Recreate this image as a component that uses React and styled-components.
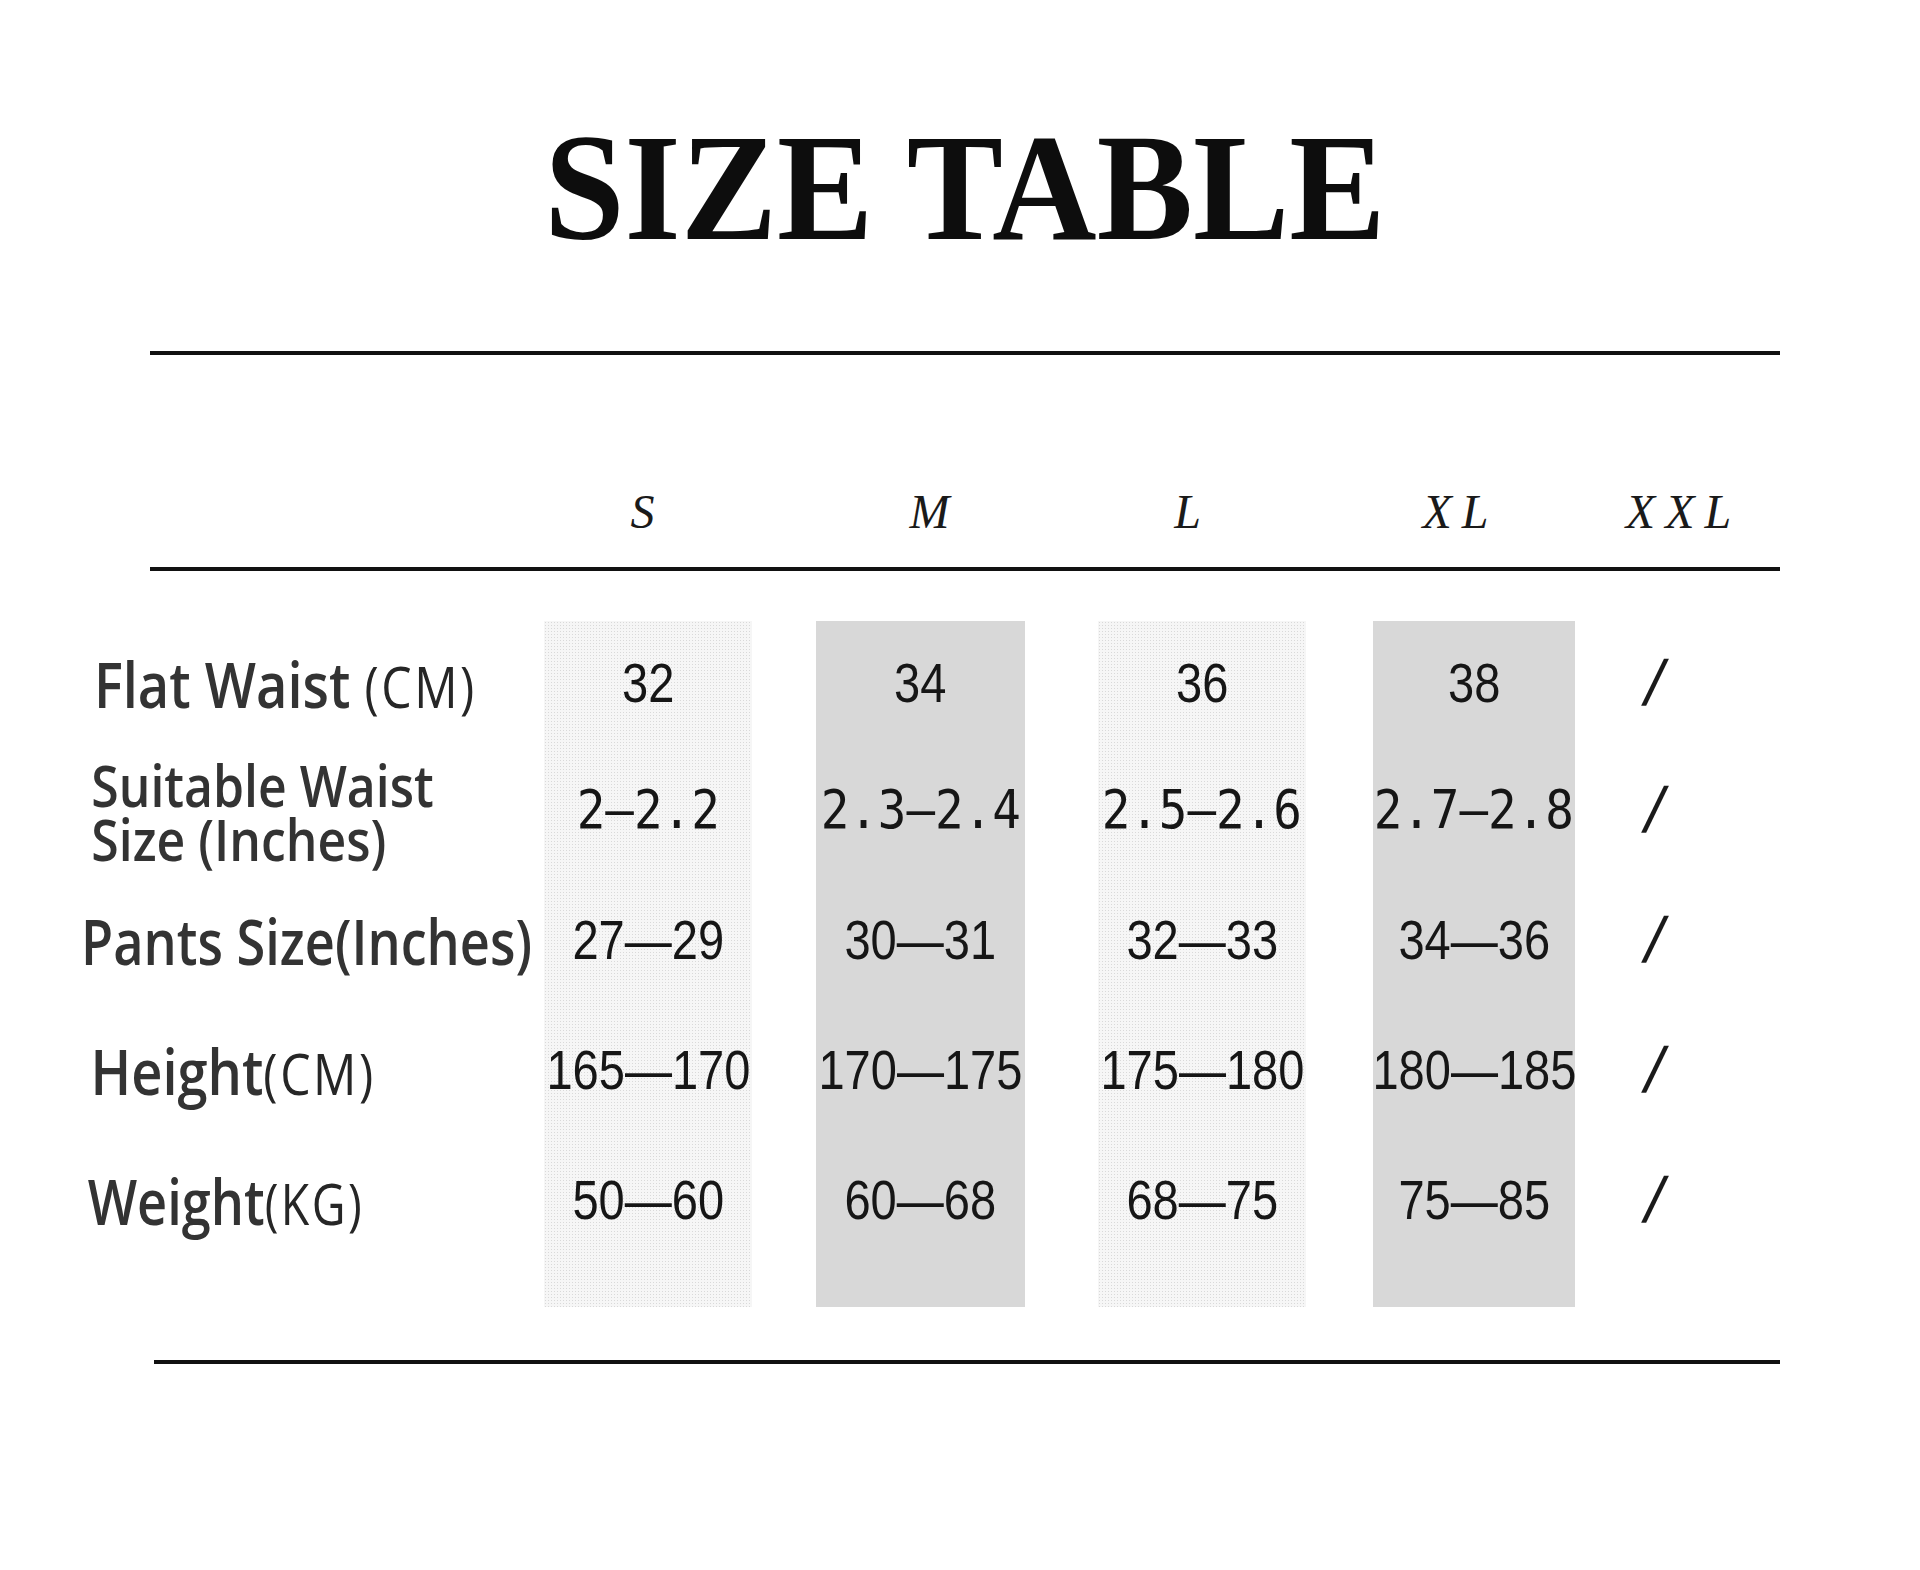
import React from "react";
import styled, { createGlobalStyle } from "styled-components";

const GlobalStyle = createGlobalStyle`
  html, body {
    margin: 0;
    padding: 0;
    background: #fff;
  }
`;

const sizes = [
  { key: "S" },
  { key: "M" },
  { key: "L" },
  { key: "XL", spaced: true },
  { key: "XXL", spaced: true },
];

// grid columns of the body: value bands sit in 2, 4, 6, 8 with gutters between
const bandCols = [2, 4, 6, 8];

const rows = [
  { label: "Flat Waist ", unit: "(CM)", indent: 15, squeeze: 0.86, values: ["32", "34", "36", "38"] },
  { label: "Suitable Waist", label2: "Size (Inches)", indent: 12, squeeze: 0.86, small: true, mono: true, values: ["2—2.2", "2.3—2.4", "2.5—2.6", "2.7—2.8"] },
  { label: "Pants Size(Inches)", indent: 0, squeeze: 0.83, values: ["27—29", "30—31", "32—33", "34—36"] },
  { label: "Height", unit: "(CM)", indent: 11, squeeze: 0.86, values: ["165—170", "170—175", "175—180", "180—185"] },
  { label: "Weight", unit: "(KG)", indent: 8, squeeze: 0.83, values: ["50—60", "60—68", "68—75", "75—85"] },
];

const Page = styled.div`
  width: 1920px;
  height: 1570px;
  padding-top: 112px;
  box-sizing: border-box;
  background: #fff;
`;

const Title = styled.h1`
  margin: 0 0 0 150px;
  width: 1630px;
  text-align: center;
  font-family: "Liberation Serif", "Times New Roman", serif;
  font-weight: 700;
  font-size: 152px;
  line-height: 152px;
  color: #0d0d0d;

  span {
    display: inline-block;
    transform: scaleX(0.95);
  }
`;

const Head = styled.div`
  margin: 87px 0 0 150px;
  width: 1630px;
  box-sizing: border-box;
  border-top: 4px solid #111;
  border-bottom: 4px solid #111;
  padding: 133px 0 31px;
  display: grid;
  grid-template-columns: 349px 287px 287px 229px 317px 129px 1fr;
`;

const SizeHead = styled.div`
  grid-column: ${(p) => p.$col};
  text-align: center;
  font-family: "Liberation Serif", "Times New Roman", serif;
  font-style: italic;
  font-size: 48px;
  line-height: 48px;
  letter-spacing: ${(p) => (p.$spaced ? 10 : 0)}px;
  color: #1a1a1a;
`;

const Body = styled.div`
  margin: 50px 0 0 81px;
  width: 1699px;
  display: grid;
  grid-template-columns: 463px 208px 64px 209px 73px 208px 67px 202px 1fr;
  grid-template-rows: 124px repeat(4, 130px) 42px;
`;

const Band = styled.div`
  grid-column: ${(p) => p.$col};
  grid-row: 1 / -1;
  background-color: ${(p) => (p.$dark ? "#d8d8d8" : "#f6f6f6")};
  background-image: ${(p) =>
    p.$dark ? "none" : "radial-gradient(#d9d9d9 0.7px, transparent 1px)"};
  background-size: 3px 3px;
`;

const Label = styled.div`
  grid-column: 1;
  grid-row: ${(p) => p.$row};
  align-self: center;
  padding-left: ${(p) => p.$indent}px;
  margin-top: ${(p) => (p.$small ? 4 : 0)}px;
  font-family: "Open Sans", "Noto Sans", sans-serif;
  font-weight: 600;
  font-size: ${(p) => (p.$small ? 58 : 63)}px;
  line-height: ${(p) => (p.$small ? "54px" : "1")};
  color: #333;
  white-space: nowrap;
  transform: scaleX(${(p) => p.$squeeze});
  transform-origin: left center;
`;

const Unit = styled.span`
  font-weight: 400;
  font-size: 56px;
  letter-spacing: 3px;
  color: #262626;
`;

const Cell = styled.div`
  grid-column: ${(p) => p.$col};
  grid-row: ${(p) => p.$row};
  display: flex;
  align-items: center;
  justify-content: ${(p) => (p.$start ? "flex-start" : "center")};
  padding-left: ${(p) => (p.$start ? 71 : 0)}px;
`;

const Value = styled.span`
  display: inline-block;
  white-space: nowrap;
  line-height: 1;
  color: #161616;
  font-family: ${(p) =>
    p.$mono ? '"DejaVu Sans Mono", "Liberation Mono", monospace' : '"Liberation Sans", Arial, sans-serif'};
  font-size: ${(p) => (p.$mono ? 54 : 56)}px;
  transform: scaleX(${(p) => (p.$mono ? 0.88 : 0.84)});
`;

const Slash = styled.span`
  display: inline-block;
  font-family: "Liberation Sans", Arial, sans-serif;
  font-size: 64px;
  line-height: 1;
  color: #1a1a1a;
  transform: skewX(-12deg);
`;

const Rule = styled.div`
  margin: 53px 0 0 154px;
  width: 1626px;
  height: 4px;
  background: #111;
`;

export default function App() {
  return (
    <Page>
      <GlobalStyle />
      <Title>
        <span>SIZE TABLE</span>
      </Title>

      <Head>
        {sizes.map((s, i) => (
          <SizeHead key={s.key} $col={i + 2} $spaced={s.spaced}>
            {s.key}
          </SizeHead>
        ))}
      </Head>

      <Body>
        {bandCols.map((col, i) => (
          <Band key={col} $col={col} $dark={i % 2 === 1} />
        ))}

        {rows.map((r, ri) => (
          <React.Fragment key={r.label}>
            <Label $row={ri + 1} $indent={r.indent} $small={r.small} $squeeze={r.squeeze}>
              {r.label}
              {r.label2 && (
                <>
                  <br />
                  {r.label2}
                </>
              )}
              {r.unit && <Unit>{r.unit}</Unit>}
            </Label>
            {r.values.map((v, ci) => (
              <Cell key={ci} $row={ri + 1} $col={bandCols[ci]}>
                <Value $mono={r.mono}>{v}</Value>
              </Cell>
            ))}
            <Cell $row={ri + 1} $col={9} $start>
              <Slash>/</Slash>
            </Cell>
          </React.Fragment>
        ))}
      </Body>

      <Rule />
    </Page>
  );
}
